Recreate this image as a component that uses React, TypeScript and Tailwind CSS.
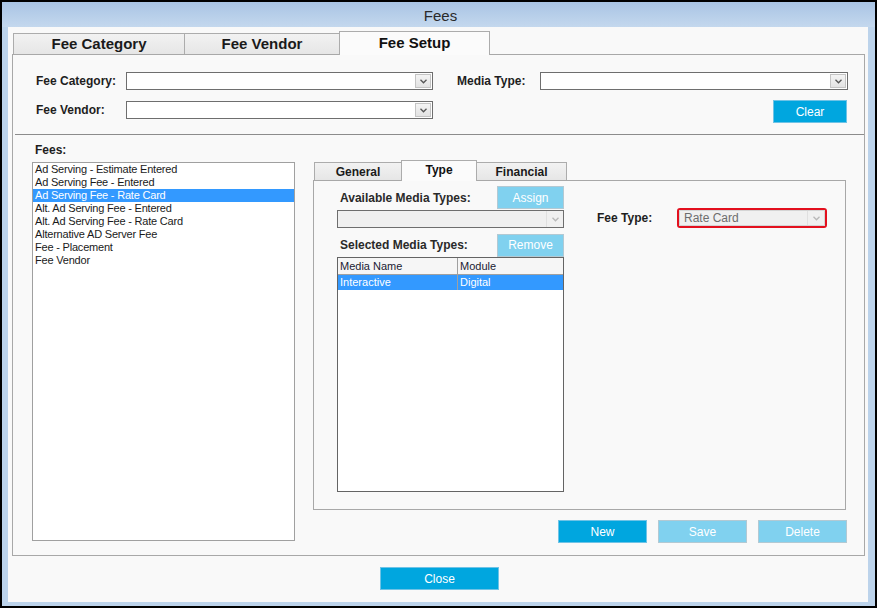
import React from 'react'

function Chevron({ light }: { light?: boolean }) {
  return (
    <svg width="7" height="5" viewBox="0 0 7 5" className={light ? 'text-[#b8b8b8]' : 'text-[#555555]'}>
      <path d="M0.5 0.8 L3.5 3.8 L6.5 0.8" fill="none" stroke="currentColor" strokeWidth="1.3" />
    </svg>
  )
}

function Combo({ className }: { className: string }) {
  return (
    <div className={`flex h-[18px] border border-[#6e6e6e] bg-white ${className}`}>
      <div className="flex-1" />
      <div className="w-[16px] my-[1px] mr-[1px] flex items-center justify-center border border-[#c4c4c4] bg-gradient-to-b from-[#f4f4f4] to-[#e3e3e3]">
        <Chevron />
      </div>
    </div>
  )
}

function DisabledCombo({ className, value, border }: { className: string; value?: string; border: string }) {
  return (
    <div className={`flex border bg-[#f0f0f0] ${border} ${className}`}>
      <div className="flex-1 flex items-center pl-[4px] text-[12px] text-[#6d6d6d]">{value}</div>
      <div className="w-[17px] flex items-center justify-center border-l border-[#e0e0e0]">
        <Chevron light />
      </div>
    </div>
  )
}

function Tab({ w, children }: { w: string; children: React.ReactNode }) {
  return (
    <div className={`${w} h-[21px] flex items-center justify-center border border-b-0 border-[#acacac] bg-gradient-to-b from-[#f2f2f2] to-[#e6e6e6] text-[15px] font-bold text-[#1a1a1a] -ml-[1px] first:ml-0`}>
      {children}
    </div>
  )
}

function SmallTab({ w, children }: { w: string; children: React.ReactNode }) {
  return (
    <div className={`${w} h-[18px] flex items-center justify-center border border-b-0 border-[#acacac] bg-gradient-to-b from-[#f2f2f2] to-[#e6e6e6] text-[12px] font-bold text-[#1a1a1a]`}>
      {children}
    </div>
  )
}

function Btn({ w, children, disabled }: { w: string; children: React.ReactNode; disabled?: boolean }) {
  return (
    <button
      type="button"
      className={`${w} h-[23px] flex items-center justify-center border text-[12px] text-white ${disabled ? 'bg-[#80d1ef] border-[#b3c9d3]' : 'bg-[#00a6df] border-[#6fc3e6]'}`}
    >
      {children}
    </button>
  )
}

export default function App() {
  const fees = [
    'Ad Serving - Estimate Entered',
    'Ad Serving Fee - Entered',
    'Ad Serving Fee - Rate Card',
    'Alt. Ad Serving Fee - Entered',
    'Alt. Ad Serving Fee - Rate Card',
    'Alternative AD Server Fee',
    'Fee - Placement',
    'Fee Vendor',
  ]

  return (
    <div className="w-[877px] h-[608px] bg-black p-[2px] font-['Liberation_Sans',Arial,sans-serif] text-[#1e1e1e]">
      <div className="h-full flex flex-col bg-[#bcd3eb] pl-[6px] pr-[7px] pb-[4px]">
        <div className="-ml-[6px] -mr-[7px] h-[25px] flex items-center justify-center bg-gradient-to-b from-[#a9c4e4] to-[#c4d8ee] text-[15px] text-[#2a2a2a] pl-[4px] pt-[3px]">
          Fees
        </div>

        <div className="flex-1 flex flex-col bg-[#f9f9f9] pl-[4px] pr-[3px] pt-[4px]">
          {/* main tabs */}
          <div className="flex items-end h-[23px] pl-[1px] relative z-10">
            <Tab w="w-[172px]">Fee Category</Tab>
            <Tab w="w-[156px]">Fee Vendor</Tab>
            <div className="w-[151px] h-[24px] -mb-[1px] -ml-[1px] flex items-start justify-center border border-b-0 border-[#acacac] bg-[#fbfbfb] text-[15px] leading-[22px] font-bold text-[#111]">
              Fee Setup
            </div>
          </div>

          <div className="h-[502px] border border-[#a8a8a8] bg-[#f9f9f9] flex flex-col">
            {/* filters */}
            <div className="flex items-center h-[18px] mt-[17px] pl-[23px]">
              <div className="w-[90px] text-[12px] font-bold">Fee Category:</div>
              <Combo className="w-[307px]" />
              <div className="w-[83px] ml-[24px] text-[12px] font-bold">Media Type:</div>
              <Combo className="w-[308px]" />
            </div>
            <div className="flex items-start h-[23px] mt-[10px] pl-[23px]">
              <div className="w-[90px] h-[18px] mt-[1px] flex items-center text-[12px] font-bold">Fee Vendor:</div>
              <Combo className="w-[307px] mt-[1px]" />
              <div className="ml-[340px]">
                <Btn w="w-[74px]">Clear</Btn>
              </div>
            </div>
            <div className="mt-[11px] ml-[2px] border-t border-[#8c8c8c]" />

            {/* body */}
            <div className="flex">
              <div className="ml-[19px] w-[263px]">
                <div className="h-[27px] pt-[8px] pl-[3px] text-[12px] leading-[14px] font-bold">Fees:</div>
                <div className="h-[379px] border border-[#a0a0a0] bg-white">
                  {fees.map((f, i) => (
                    <div
                      key={f}
                      className={`h-[13px] leading-[13px] pl-[2px] text-[11px] tracking-[-0.2px] ${i === 2 ? 'bg-[#3399ff] text-white' : 'text-[#1a1a1a]'}`}
                    >
                      {f}
                    </div>
                  ))}
                </div>
              </div>

              <div className="ml-[18px] w-[533px] pt-[25px]">
                <div className="flex items-end h-[20px] pl-[1px] relative z-10">
                  <SmallTab w="w-[88px]">General</SmallTab>
                  <div className="w-[76px] h-[21px] -mb-[1px] -ml-[1px] flex items-start justify-center border border-b-0 border-[#acacac] bg-[#fbfbfb] text-[12px] leading-[18px] font-bold text-[#111]">
                    Type
                  </div>
                  <div className="-ml-[1px]">
                    <SmallTab w="w-[91px]">Financial</SmallTab>
                  </div>
                </div>
                <div className="h-[330px] border border-[#a8a8a8] bg-[#f9f9f9] flex">
                  <div className="ml-[23px] w-[227px] pt-[6px]">
                    <div className="flex items-center justify-between h-[21px]">
                      <div className="pl-[3px] text-[12px] font-bold text-[#2a2a2a]">Available Media Types:</div>
                      <Btn w="w-[67px]" disabled>Assign</Btn>
                    </div>
                    <DisabledCombo className="h-[18px] mt-[2px]" border="border-[#6e6e6e]" />
                    <div className="flex items-center justify-between h-[22px] mt-[6px]">
                      <div className="pl-[3px] text-[12px] font-bold text-[#2a2a2a]">Selected Media Types:</div>
                      <Btn w="w-[67px]" disabled>Remove</Btn>
                    </div>
                    <div className="h-[235px] mt-[1px] border border-[#646464] bg-white">
                      <div className="flex h-[17px] bg-[#f6f6f6] border-b border-[#a0a0a0] text-[11px] text-[#1b1b33]">
                        <div className="w-[120px] pl-[2px] flex items-center border-r border-[#a0a0a0]">Media Name</div>
                        <div className="flex-1 pl-[2px] flex items-center">Module</div>
                      </div>
                      <div className="flex h-[15px] bg-[#3399ff] text-[11px] text-white">
                        <div className="w-[120px] pl-[2px] flex items-center border-r border-[#a0a0a0]">Interactive</div>
                        <div className="flex-1 pl-[2px] flex items-center">Digital</div>
                      </div>
                    </div>
                  </div>

                  <div className="ml-[33px] pt-[27px]">
                    <div className="flex items-center h-[20px]">
                      <div className="w-[80px] text-[12px] font-bold">Fee Type:</div>
                      <div className="w-[150px] h-[20px] border-2 border-[#e3101e] rounded-[3px] flex">
                        <DisabledCombo className="flex-1" border="border-[#d4d4d4]" value="Rate Card" />
                      </div>
                    </div>
                  </div>
                </div>

                <div className="flex justify-end gap-[11px] mt-[10px] -mr-[1px]">
                  <Btn w="w-[89px]">New</Btn>
                  <Btn w="w-[89px]" disabled>Save</Btn>
                  <Btn w="w-[89px]" disabled>Delete</Btn>
                </div>
              </div>
            </div>
          </div>

          <div className="mt-[11px] ml-[368px]">
            <Btn w="w-[119px]">Close</Btn>
          </div>
        </div>
      </div>
    </div>
  )
}
